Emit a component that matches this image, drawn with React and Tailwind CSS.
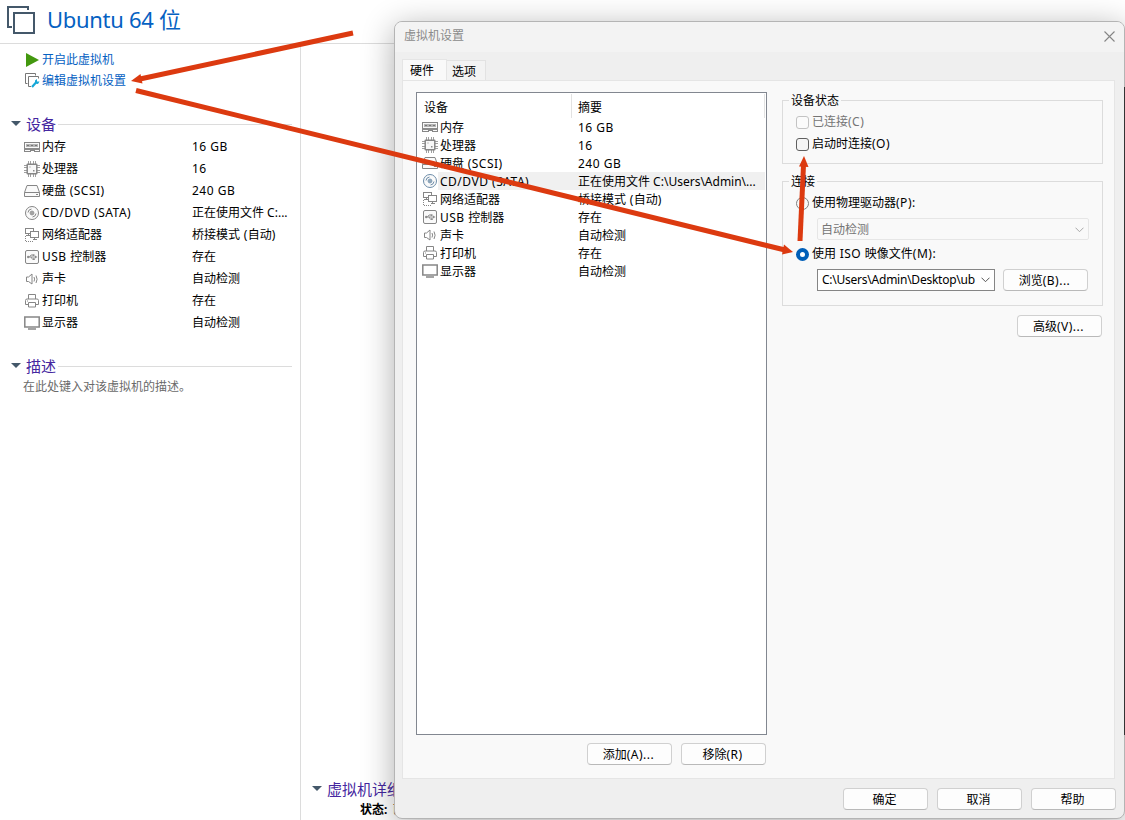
import React, { useState } from 'react';

const icons = {
  memory: (
    <g shapeRendering="crispEdges">
      <path d="M.5 3.500h15v9H10v-1H6v1H.5z" fill="#fafafa" />
      <path d="M0 9h16v2H0z" fill="#8c8c8c" stroke="none" />
      <path d="M2 5h12v3H2z" fill="#b4b4b4" stroke="none" />
      <path d="M3 6h2v1H3zM7 6h2v1H7zM11 6h2v1h-2z" fill="#777" stroke="none" />
    </g>
  ),
  cpu: (
    <g>
      <path d="M4.500 0v3M6.500 0v3M9.500 0v3M11.500 0v3M4.500 13v3M6.500 13v3M9.500 13v3M11.500 13v3M0 4.500h3M0 6.500h3M0 9.500h3M0 11.500h3M13 4.500h3M13 6.500h3M13 9.500h3M13 11.500h3" stroke="#a0a0a0" />
      <rect x="3.200" y="3.200" width="9.600" height="9.600" rx=".5" fill="#f8f8f8" strokeWidth="1.500" />
      <path d="M5.500 5.500h1v1h-1zM9 9h1.500v1.500H9z" fill="#8c8c8c" stroke="none" />
    </g>
  ),
  disk: (
    <g>
      <path d="M3 2.500h10l2.500 7v4H.5v-4z" fill="#fafafa" />
      <path d="M.5 9.500h15M12 11.500h2" />
    </g>
  ),
  cd: (
    <g>
      <circle cx="8" cy="8" r="6.500" fill="#fafafa" />
      <circle cx="8" cy="8" r="1.900" />
      <circle cx="8" cy="8" r=".6" fill="#8c8c8c" />
      <path d="M4 7.500a4 4 0 0 1 3.500-3.500M12 8.500a4 4 0 0 1-3.500 3.500" />
    </g>
  ),
  network: (
    <g shapeRendering="crispEdges">
      <path d="M6.500 6.500h-5v-5h8v3" />
      <path d="M6.500 4.500h8v6h-8zM8.500 12.500h4M10.500 10v2M4.500 7v2M2 8.500h4" />
      <path d="M1.500 9v5.500h8" strokeDasharray="1 1" />
    </g>
  ),
  usb: (
    <g>
      <rect x="1.500" y="1.500" width="13" height="13" rx="1.500" fill="#fafafa" />
      <path d="M4 8h8M5.500 8l1.500-2h2M7 8l1.500 2.300H10" strokeWidth=".9" />
      <path d="M11 6.500L13.500 8 11 9.500zM8.700 5.200h1.800v1.700H8.700zM9 9.300h1.800V11H9z" fill="#8c8c8c" stroke="none" />
      <circle cx="4.200" cy="8" r="1.200" fill="#8c8c8c" stroke="none" />
    </g>
  ),
  sound: (
    <g>
      <path d="M2.500 6h2L8 3v10L4.500 10.500h-2z" />
      <path d="M10 6q1.200 2 0 4.500M12 4.500q2.200 3.700 0 7.500" />
    </g>
  ),
  printer: (
    <g>
      <path d="M4.500 6V1.500h7V6M4.500 11.500h-3v-4q0-1.500 1.500-1.500h10q1.500 0 1.500 1.500v4h-3M4.500 9.500h7v4.500h-7zM3 8h1" />
    </g>
  ),
  display: (
    <g>
      <rect x=".8" y="2" width="14.400" height="10" fill="#fff" strokeWidth="1.500" />
      <path d="M4 14h8" strokeWidth="1.500" />
    </g>
  ),
};

const DeviceIcon = ({ name, active }) => (
  <svg
    width="16"
    height="16"
    viewBox="0 0 16 16"
    fill="none"
    stroke={active ? '#6c8ca8' : '#868686'}
    strokeWidth="1"
    className="shrink-0"
  >
    {icons[name]}
  </svg>
);

// Latin runs are set a little wider than the Chinese around them
const Mixed = ({ children }) => (
  <>
    {children.split(/([\x20-\x7e]+)/).map((part, i) =>
      i % 2 ? <span key={i} className="tracking-[0.5px] whitespace-pre">{part}</span> : part
    )}
  </>
);

const Chevron = ({ className }) => (
  <svg width="9" height="6" viewBox="0 0 9 6" fill="none" stroke="currentColor" className={`shrink-0 ${className}`}>
    <path d="M.5.7l4 4 4-4" />
  </svg>
);

const devices = [
  { icon: 'memory', name: '内存', summary: '16 GB' },
  { icon: 'cpu', name: '处理器', summary: '16' },
  { icon: 'disk', name: '硬盘 (SCSI)', summary: '240 GB' },
  { icon: 'cd', name: 'CD/DVD (SATA)', summary: '正在使用文件 C:...', full: '正在使用文件 C:\\Users\\Admin\\...' },
  { icon: 'network', name: '网络适配器', summary: '桥接模式 (自动)' },
  { icon: 'usb', name: 'USB 控制器', summary: '存在' },
  { icon: 'sound', name: '声卡', summary: '自动检测' },
  { icon: 'printer', name: '打印机', summary: '存在' },
  { icon: 'display', name: '显示器', summary: '自动检测' },
];

const SectionTitle = ({ children, line = true }) => (
  <div className="flex items-center h-[22px]">
    <svg width="10" height="6" viewBox="0 0 10 6" className="shrink-0 mr-[5px]">
      <path d="M0 0h10L5 5z" fill="#44586a" />
    </svg>
    <span className="text-[15px] leading-[22px] text-[#4527a0] whitespace-nowrap">{children}</span>
    {line && <div className="flex-1 h-px bg-[#dcdcdc] ml-[2px]"></div>}
  </div>
);

const Button = ({ children }) => (
  <button className="w-[85px] h-[22px] flex items-center justify-center bg-[#fdfdfd] border border-[#d0d0d0] border-b-[#b9b9b9] rounded-[4px] text-xs leading-none whitespace-nowrap pt-[2px] pr-[2px]">
    <Mixed>{children}</Mixed>
  </button>
);

const Sidebar = () => (
  <aside className="w-[301px] shrink-0 border-r border-[#dcdcdc] pt-[5px]">
    <div className="flex items-center h-[21px] pl-[26px] text-xs text-[#0561c2]">
      <svg width="13" height="14" viewBox="0 0 13 14" className="mr-[3px]">
        <path d="M0 0L13 7 0 14z" fill="#43980f" />
      </svg>
      开启此虚拟机
    </div>
    <div className="flex items-center h-[21px] pl-[25px] text-xs text-[#0561c2]">
      <svg width="15" height="15" viewBox="0 0 15 15" fill="none" className="mr-[2px]">
        <path d="M2.500 10.500h-2V.5h10v2" stroke="#777" />
        <path d="M6 13.500H3.500v-10h10v2" stroke="#777" />
        <path d="M7 14l4-4.500" stroke="#16a8d8" strokeWidth="2.200" />
        <path d="M10 7.500l2-1.500v2.500h2.500l-1.500 2.500-3-.5z" fill="#16a8d8" />
      </svg>
      编辑虚拟机设置
    </div>

    <div className="mt-[22px] pl-[11px] pr-2">
      <SectionTitle>设备</SectionTitle>
      <ul className="pl-[13px] pt-px">
        {devices.map((d) => (
          <li key={d.icon} className="flex items-center h-[22px] text-xs whitespace-nowrap">
            <DeviceIcon name={d.icon} />
            <span className="w-[150px] pl-[2px] mr-[2px]">
              <Mixed>{d.name}</Mixed>
            </span>
            <span>{d.full ? d.summary : <Mixed>{d.summary}</Mixed>}</span>
          </li>
        ))}
      </ul>
    </div>

    <div className="mt-[21px] pl-[11px] pr-2">
      <SectionTitle>描述</SectionTitle>
      <p className="pl-3 pt-px text-xs leading-[18px] text-[#6a6a6a]">在此处键入对该虚拟机的描述。</p>
    </div>
  </aside>
);

const HardwareList = ({ selected, onSelect }) => (
  <div className="w-[351px] h-[643px] border border-[#828790] bg-white text-xs">
    <div className="flex h-[25px] pt-px">
      <div className="w-[155px] pl-[7px] pt-[5px] leading-[18px] border-r border-[#e2e2e2]">设备</div>
      <div className="w-[193px] pl-[6px] pt-[5px] leading-[18px] border-r border-[#e2e2e2]">摘要</div>
    </div>
    {devices.map((d) => (
      <div key={d.icon} onClick={() => onSelect(d.icon)} className="flex items-center h-[18px] pl-[5px] pr-px whitespace-nowrap">
        <DeviceIcon name={d.icon} active={selected === d.icon} />
        <div className={`flex flex-1 items-center h-full pl-[2px] pt-[2px] ${selected === d.icon ? 'bg-[#f0f0f0]' : ''}`}>
          <span className="w-[138px]">
            <Mixed>{d.name}</Mixed>
          </span>
          <span>{d.full || <Mixed>{d.summary}</Mixed>}</span>
        </div>
      </div>
    ))}
  </div>
);

const DeviceOptions = () => (
  <div className="w-[321px] text-xs">
    <fieldset className="h-[72px] border border-[#dcdcdc] pl-[13px]">
      <legend className="-ml-[7px] px-[2px] pt-px leading-[15px] h-4">设备状态</legend>
      <div className="flex flex-col gap-[4px] pt-[5px]">
        <label className="flex items-center h-[18px] gap-[3px] text-[#757575]">
          <span className="w-[13px] h-[13px] border border-[#c3c3c3] rounded-[3px] bg-[#fbfbfb]"></span>
          <span><Mixed>已连接(C)</Mixed></span>
        </label>
        <label className="flex items-center h-[18px] gap-[3px]">
          <span className="w-[13px] h-[13px] border border-[#5f5f5f] rounded-[3px] bg-[#f5f5f5]"></span>
          <span><Mixed>启动时连接(O)</Mixed></span>
        </label>
      </div>
    </fieldset>

    <fieldset className="h-[133px] mt-[9px] border border-[#dcdcdc] pl-[13px]">
      <legend className="-ml-[7px] px-[2px] pt-px leading-[15px] h-4">连接</legend>
      <label className="flex items-center h-[18px] gap-[3px] mt-[5px]">
        <span className="w-[13px] h-[13px] border border-[#808080] rounded-full"></span>
        <span><Mixed>使用物理驱动器(P):</Mixed></span>
      </label>
      <div className="ml-[21px] mt-[6px] w-[272px] h-[22px] flex items-center justify-between pl-[3px] pr-[4px] pt-px border border-[#e6e6e6] rounded-[2px] text-[#757575]">
        自动检测
        <Chevron className="text-[#a8a8a8]" />
      </div>
      <label className="flex items-center h-[18px] gap-[3px] mt-[5px]">
        <span className="w-[13px] h-[13px] border-4 border-[#005fb8] bg-white rounded-full"></span>
        <span><Mixed>使用 ISO 映像文件(M):</Mixed></span>
      </label>
      <div className="flex items-center gap-2 ml-[21px] mt-[6px]">
        <div className="w-[178px] h-[22px] flex items-center justify-between pl-1 pr-[4px] border border-[#858585] bg-white whitespace-nowrap">
          <span className="tracking-[-0.24px]">C:\Users\Admin\Desktop\ub</span>
          <Chevron className="text-[#555]" />
        </div>
        <Button>浏览(B)...</Button>
      </div>
    </fieldset>

    <div className="flex justify-end mt-[9px] pr-px">
      <Button>高级(V)...</Button>
    </div>
  </div>
);

const SettingsDialog = () => {
  const [tab, setTab] = useState('hardware');
  const [selected, setSelected] = useState('cd');

  return (
    <div className="absolute left-[394px] top-[21px] w-[731px] h-[798px] flex flex-col bg-[#efefef] border border-[#b4b4b4] rounded-[8px] shadow-[0_6px_32px_rgba(0,0,0,0.32)] overflow-hidden">
      <div className="flex items-center justify-between h-[30px] shrink-0 bg-[#f3f3f3] pl-[9px] pr-[9px] pb-[2px] text-xs text-[#8b8b8b]">
        虚拟机设置
        <svg width="11" height="11" viewBox="0 0 11 11" stroke="#858585" strokeWidth="1.100">
          <path d="M.5.5l10 10M10.500.5l-10 10" />
        </svg>
      </div>

      <div className="flex items-end h-[28px] shrink-0 pl-[7px] text-xs">
        <button
          onClick={() => setTab('hardware')}
          className="w-[45px] h-[22px] -mb-px pl-px pr-[6px] border border-b-0 border-[#e5e5e5] bg-[#f9f9f9]"
        >
          硬件
        </button>
        <button
          onClick={() => setTab('options')}
          className="w-[39px] h-5 pt-[3px] pr-[4px] border border-l-0 border-b-0 border-[#e2e2e2] bg-[#f3f3f3]"
        >
          选项
        </button>
      </div>

      <div className="flex gap-[15px] w-[713px] h-[699px] shrink-0 ml-[7px] pl-[13px] pt-[11px] border border-[#e5e5e5] bg-[#f9f9f9]">
        <div>
          <HardwareList selected={selected} onSelect={setSelected} />
          <div className="flex justify-end gap-[9px] mt-2 pr-px">
            <Button>添加(A)...</Button>
            <Button>移除(R)</Button>
          </div>
        </div>
        <DeviceOptions key={tab} />
      </div>

      <div className="flex justify-end gap-[9px] pt-[9px] pr-[8px]">
        <Button>确定</Button>
        <Button>取消</Button>
        <Button>帮助</Button>
      </div>
    </div>
  );
};

const Arrows = () => (
  <svg width="1125" height="820" viewBox="0 0 1125 820" className="absolute left-0 top-0 pointer-events-none">
    <g stroke="#dc3a10" strokeWidth="5">
      <path d="M353 33L140 79" />
      <path d="M136 90.500L785 250" />
      <path d="M800 241L803.500 165" />
    </g>
    <g fill="#dc3a10">
      <path d="M131 81L140.500 74 142.500 83.500z" />
      <path d="M793 252L784 244.500 782 254.500z" />
      <path d="M804 156L808.500 167 799 166.500z" />
    </g>
  </svg>
);

const App = () => {
  return (
    <div className="relative w-[1125px] h-[820px] overflow-hidden flex flex-col bg-white text-black font-['Noto_Sans','Noto_Sans_CJK_SC',sans-serif]">
      {/* Header */}
      <header className="flex items-center h-11 shrink-0 border-b border-[#dcdcdc] pl-[7px] pb-[3px]">
        <svg width="28" height="28" viewBox="0 0 28 28" fill="none" stroke="#44586a" strokeWidth="2" className="mr-[12px]">
          <path d="M5 21H1V1h20v3" />
          <path d="M7 7h20v20H7z" />
        </svg>
        <h1 className="text-[22px] leading-[28px] pb-[2px] tracking-[-0.3px] text-[#0561c2]">Ubuntu 64 位</h1>
      </header>

      <div className="flex flex-1 min-h-0">
        <Sidebar />
        <main className="flex-1 flex flex-col justify-end pl-[11px] text-xs">
          <SectionTitle line={false}>虚拟机详细信息</SectionTitle>
          <p className="pl-[48px] h-[20px] leading-5">
            <b>状态:</b> <span className="ml-[2px]">已关机</span>
          </p>
        </main>
      </div>

      {/* Edge of the window behind */}
      <div className="absolute right-0 top-[87px] w-px h-[648px] bg-[#333] z-10"></div>

      <SettingsDialog />
      <Arrows />
    </div>
  );
};

export default App;
